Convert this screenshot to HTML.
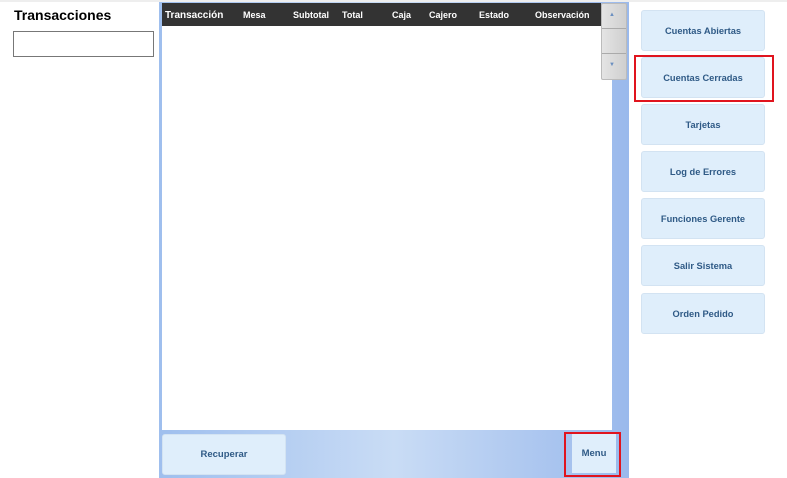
<!DOCTYPE html>
<html><head><style>
body{margin:0;width:787px;height:478px;background:#fff;position:relative;overflow:hidden;font-family:"Liberation Sans",Arial,sans-serif}
.a{position:absolute}
.t{font-weight:bold;font-size:9px;color:#fff;top:10px}
.btn{position:absolute;left:641px;width:122px;height:38px;padding-top:1px;background:#dfeefb;border:1px solid #d3e3f2;border-radius:3px;color:#2f5a86;font-weight:bold;font-size:9.3px;display:flex;align-items:center;justify-content:center}
</style></head><body>
<div class="a" style="left:0;top:0;width:787px;height:2px;background:#eee"></div>
<div class="a" style="left:14px;top:7px;font-size:14px;font-weight:bold;color:#000">Transacciones</div>
<div class="a" style="left:13px;top:31px;width:139px;height:24px;border:1px solid #777;background:#fff"></div>
<div class="a" style="left:159px;top:2px;width:470px;height:476px;background:linear-gradient(90deg,#9fbfee,#c9dcf5 50%,#9ab9ec)"></div>
<div class="a" style="left:162px;top:26px;width:450px;height:404px;background:#fff"></div>
<div class="a" style="left:162px;top:3px;width:439px;height:23px;background:#333"></div>
<div class="a t" style="left:165px;font-size:10px;top:10px">Transacción</div>
<div class="a t" style="left:243px">Mesa</div>
<div class="a t" style="left:293px">Subtotal</div>
<div class="a t" style="left:342px">Total</div>
<div class="a t" style="left:392px">Caja</div>
<div class="a t" style="left:429px">Cajero</div>
<div class="a t" style="left:479px">Estado</div>
<div class="a t" style="left:535px">Observación</div>
<div class="a" style="left:601px;top:3px;width:24px;height:75px;background:linear-gradient(90deg,#e4e4e4,#cfcfcf);border:1px solid #bbb;border-radius:2px"></div>
<div class="a" style="left:602px;top:28px;width:24px;height:1px;background:#aaa"></div>
<div class="a" style="left:602px;top:53px;width:24px;height:1px;background:#aaa"></div>
<div class="a" style="left:609px;top:12px;font-size:6px;color:#6a8fc0">▲</div>
<div class="a" style="left:609px;top:62px;font-size:6px;color:#6a8fc0">▼</div>
<div class="a" style="left:162px;top:434px;width:122px;height:39px;background:#dfeefb;border:1px solid #d3e3f2;border-radius:3px;color:#2f5a86;font-weight:bold;font-size:9.5px;display:flex;align-items:center;justify-content:center">Recuperar</div>
<div class="a" style="left:572px;top:434px;width:44px;height:39px;background:#dfeefb;color:#2f5a86;font-weight:bold;font-size:9.5px;display:flex;align-items:center;justify-content:center">Menu</div>
<div class="a" style="left:564px;top:432px;width:53px;height:41px;border:2px solid #e0141e"></div>
<div class="btn" style="top:10px">Cuentas Abiertas</div>
<div class="btn" style="top:57px">Cuentas Cerradas</div>
<div class="btn" style="top:104px">Tarjetas</div>
<div class="btn" style="top:151px">Log de Errores</div>
<div class="btn" style="top:198px">Funciones Gerente</div>
<div class="btn" style="top:245px">Salir Sistema</div>
<div class="btn" style="top:293px">Orden Pedido</div>
<div class="a" style="left:634px;top:55px;width:136px;height:43px;border:2px solid #e0141e"></div>
</body></html>
